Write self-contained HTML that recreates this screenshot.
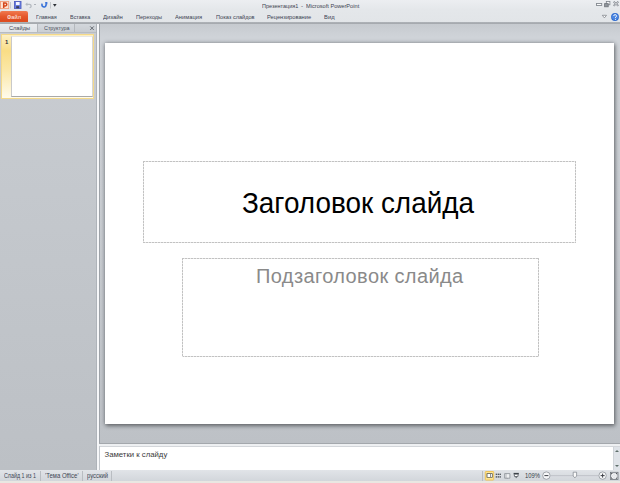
<!DOCTYPE html>
<html><head><meta charset="utf-8">
<style>
*{margin:0;padding:0;box-sizing:border-box}
html,body{width:620px;height:483px;overflow:hidden;background:#c0c4c9;font-family:"Liberation Sans",sans-serif}
.a{position:absolute}
.t{position:absolute;white-space:nowrap;transform-origin:0 0;line-height:1}
#top{left:0;top:0;width:620px;height:22px;background:linear-gradient(#eceef1,#e4e7ea 45%,#e2e5e8)}
#tline{left:0;top:22px;width:620px;height:2px;background:linear-gradient(#b0b4b9,#a3a7ac)}
.tab{top:14px;font-size:6.2px;color:#3c4452}
#file{left:0;top:11px;width:28px;height:12px;background:linear-gradient(#f07a50,#e5582c 45%,#dc4a20 85%,#e8652c);border-radius:2px 2px 0 0}
#left{left:0;top:24px;width:96px;height:446px;background:linear-gradient(#cacdd2,#c5c9ce 30%,#bcc0c5)}
#ltabs{left:0;top:24px;width:96px;height:9px;background:linear-gradient(#d3d7dc,#c7cbd0)}
#lt1{left:0;top:24px;width:37px;height:9px;background:linear-gradient(#e9ecef,#dfe2e6)}
#lt2{left:37px;top:24px;width:38px;height:9px;background:linear-gradient(#d6dadf,#c9cdd2);border-left:1px solid #b4b8bd;border-right:1px solid #b4b8bd}
#split{left:96px;top:24px;width:3px;height:446px;background:#f6f7f9;border-left:1px solid #aeb3b9}
#splitd{left:99px;top:24px;width:1px;height:420px;background:#9ea3a9}
#stage{left:100px;top:24px;width:520px;height:420px;background:linear-gradient(#c6cacf,#cfd3d8 3%,#c8ccd1 50%,#bdc1c6)}
#slide{left:105px;top:43px;width:509px;height:381px;background:#fff;box-shadow:0 0 4px rgba(50,55,65,.45),1px 2px 4px rgba(0,0,0,.38)}
#notesb{left:99px;top:444px;width:521px;height:2px;background:#eef0f2}
#notesl{left:99px;top:446px;width:521px;height:1px;background:#d3d6da}
#notes{left:99px;top:447px;width:521px;height:23px;background:#fff}
#vs{left:613px;top:447px;width:7px;height:23px;background:#dfe3e8;border-left:1px solid #d0d4d9}
#status{left:0;top:470px;width:620px;height:11px;background:linear-gradient(#e1e4e8,#d2d6db)}
#sbot{left:0;top:481px;width:620px;height:2px;background:#e9e7e2}
.hd{background-image:repeating-linear-gradient(90deg,#c2c2c2 0 2px,#e6e6e6 2px 3px)}
.vd{background-image:repeating-linear-gradient(180deg,#c2c2c2 0 2px,#e6e6e6 2px 3px)}
.sdiv{top:471px;width:1px;height:10px;background:#b9bdc2}
</style></head><body>
<div class="a" id="top"></div>
<!-- QAT -->
<svg class="a" style="left:0;top:0" width="60" height="11" viewBox="0 0 60 11">
  <rect x="0.5" y="1.4" width="8.2" height="7.2" fill="#fde4d6" stroke="#f09a76" stroke-width="0.9"/>
  <path d="M3.7 7.9V3.1h1.7a1.4 1.4 0 0 1 0 2.8H3.7" fill="none" stroke="#d4461a" stroke-width="1.5"/>
  <rect x="10.2" y="2" width="0.7" height="6.5" fill="#b4b8be"/>
  <rect x="14.5" y="1.5" width="6.5" height="7" fill="#6b7fe0" stroke="#4f5fc0" stroke-width="0.9"/>
  <rect x="16" y="2" width="3.6" height="3" fill="#f4f6ff"/>
  <rect x="16.2" y="6.2" width="3" height="2" fill="#3a3f55"/>
  <path d="M27 4.3H29.2A1.7 1.7 0 0 1 29.6 7.7" fill="none" stroke="#b5bac1" stroke-width="1.3"/><path d="M25.2 4.3l2.2-1.9v3.8z" fill="#b5bac1"/>
  <rect x="34" y="4.2" width="2" height="0.8" fill="#a0a6ad"/>
  <path d="M42.3 3.6A2.1 2.1 0 1 0 46.1 4.9V2.6" fill="none" stroke="#3a73d9" stroke-width="1.6"/><path d="M44.8 2.1h2.6v2.4z" fill="#3a73d9"/>
  <rect x="50.2" y="2" width="0.7" height="6.5" fill="#b4b8be"/>
  <path d="M53 4h3.6l-1.8 2.8z" fill="#2c3036"/>
</svg>
<div class="t" style="left:262px;top:3px;font-size:6.2px;color:#3d4350;transform:scaleX(.89)">Презентация1</div><div class="t" style="left:301px;top:3px;font-size:6.2px;color:#3d4350">-</div><div class="t" style="left:306.4px;top:3px;font-size:6.2px;color:#3d4350;transform:scaleX(.91)">Microsoft PowerPoint</div>
<!-- window controls -->
<svg class="a" style="left:594px;top:0" width="26" height="23" viewBox="0 0 26 23">
  <rect x="2.5" y="3.5" width="5.2" height="2" fill="#fafbfc" stroke="#858a91" stroke-width="0.9"/>
  <rect x="12.3" y="1.4" width="3.6" height="3.4" fill="#f4f5f7" stroke="#7d828a" stroke-width="0.8"/>
  <rect x="10.6" y="3.6" width="3.6" height="3.2" fill="#8e939a" stroke="#6f747b" stroke-width="0.8"/>
  <path d="M19.6 1.7l4.8 4.2M24.4 1.7l-4.8 4.2" stroke="#7d828a" stroke-width="1.7"/>
  <path d="M19.6 1.7l4.8 4.2M24.4 1.7l-4.8 4.2" stroke="#f4f5f7" stroke-width="0.6"/>
  <path d="M8.3 15.3h4.2l-2.1 2.6z" fill="#fff" stroke="#80858c" stroke-width="0.8"/>
  <circle cx="21" cy="17" r="3.9" fill="#2f6bcf"/>
  <circle cx="21" cy="16.8" r="3.1" fill="#4c86e0"/>
  <path d="M19.7 16a1.4 1.3 0 1 1 1.8 1.2v.8" fill="none" stroke="#fff" stroke-width="0.9"/>
  <rect x="21" y="18.9" width="0.9" height="0.9" fill="#fff"/>
</svg>
<!-- tabs -->
<div class="a" id="file"></div>
<div class="t" style="left:7px;top:14px;font-size:6.2px;color:#fff2ee;transform:scaleX(.92)">Файл</div>
<div class="t tab" style="left:35.6px;transform:scaleX(.88)">Главная</div>
<div class="t tab" style="left:69.7px;transform:scaleX(.88)">Вставка</div>
<div class="t tab" style="left:103px;transform:scaleX(.95)">Дизайн</div>
<div class="t tab" style="left:136px;transform:scaleX(.9)">Переходы</div>
<div class="t tab" style="left:175.3px;transform:scaleX(.93)">Анимация</div>
<div class="t tab" style="left:215.9px;transform:scaleX(.905)">Показ слайдов</div>
<div class="t tab" style="left:266.6px;transform:scaleX(.923)">Рецензирование</div>
<div class="t tab" style="left:324.3px;transform:scaleX(.94)">Вид</div>
<div class="a" id="tline"></div>
<!-- left pane -->
<div class="a" id="left"></div>
<div class="a" id="ltabs"></div>
<div class="a" id="lt1"></div>
<div class="a" id="lt2"></div>
<div class="a" style="left:0;top:32px;width:96px;height:1px;background:#b8bcc1"></div>
<div class="t" style="left:9px;top:25px;font-size:6px;color:#3c4452;transform:scaleX(.94)">Слайды</div>
<div class="t" style="left:43.7px;top:25px;font-size:6px;color:#4a505c;transform:scaleX(.9)">Структура</div>
<svg class="a" style="left:89px;top:25px" width="6" height="6" viewBox="0 0 6 6"><path d="M1.2 1.4l3.6 3.6M4.8 1.4l-3.6 3.6" stroke="#5f646b" stroke-width="0.95"/></svg>
<div class="a" style="left:1px;top:34px;width:93px;height:65px;border:1px solid #f4d98a;background:linear-gradient(#fdf0c4,#f9dd85 25%,#fbe7a6 55%,#fffbec)"></div>
<div class="a" style="left:11px;top:36px;width:82px;height:61px;background:#fff;border:1px solid #c9c9c9;border-top-color:#e6e6e6;border-right-color:#d6d6d6;border-bottom-color:#a9a9a9"></div>
<div class="t" style="left:5px;top:39px;font-size:6px;font-weight:bold;color:#30343a">1</div>
<div class="a" id="split"></div>
<div class="a" id="splitd"></div>
<div class="a" id="stage"></div>
<div class="a" id="slide"></div>
<div class="a hd" style="left:143px;top:161px;width:433px;height:1px"></div>
<div class="a hd" style="left:143px;top:242px;width:433px;height:1px"></div>
<div class="a vd" style="left:143px;top:161px;width:1px;height:82px"></div>
<div class="a vd" style="left:575px;top:161px;width:1px;height:82px"></div>
<div class="t" style="left:242px;top:189px;font-size:29px;color:#000;transform:scaleX(.962)">Заголовок слайда</div>
<div class="a hd" style="left:182px;top:258px;width:357px;height:1px"></div>
<div class="a hd" style="left:182px;top:356px;width:357px;height:1px"></div>
<div class="a vd" style="left:182px;top:258px;width:1px;height:99px"></div>
<div class="a vd" style="left:538px;top:258px;width:1px;height:99px"></div>
<div class="t" style="left:256px;top:266px;font-size:20px;letter-spacing:0.39px;color:#8a8a8a">Подзаголовок слайда</div>
<div class="a" id="notesb"></div><div class="a" style="left:99px;top:443px;width:521px;height:1px;background:#a3a7ac"></div>
<div class="a" id="notesl"></div>
<div class="a" id="notes"></div>
<div class="t" style="left:104.5px;top:450.5px;font-size:7.75px;color:#3a3a3a">Заметки к слайду</div>
<div class="a" style="left:99px;top:446px;width:1px;height:24px;background:#c3c7cc"></div>
<div class="a" id="vs"></div>
<svg class="a" style="left:614px;top:447px" width="6" height="23" viewBox="0 0 6 23"><path d="M1 5h4l-2-2z" fill="#5f6f6a"/><path d="M1 18h4l-2 2z" fill="#5f6f6a"/></svg>
<!-- status -->
<div class="a" id="status"></div>
<div class="a" id="sbot"></div>
<div class="t" style="left:4px;top:472.5px;font-size:6.3px;color:#3e4652;transform:scaleX(.85)">Слайд 1 из 1</div>
<div class="a sdiv" style="left:40px"></div>
<div class="t" style="left:45px;top:472.5px;font-size:6.3px;color:#3e4652;transform:scaleX(.95)">'Тема Office'</div>
<div class="a sdiv" style="left:82px"></div>
<div class="t" style="left:86.8px;top:472.5px;font-size:6.3px;color:#3e4652;transform:scaleX(.93)">русский</div>
<div class="a sdiv" style="left:111px"></div>
<div class="a sdiv" style="left:482px"></div>
<svg class="a" style="left:484px;top:470px" width="136" height="12" viewBox="0 0 136 12">
  <rect x="1.3" y="1.5" width="8.4" height="8.6" rx="0.6" fill="#fde594" stroke="#efc14f" stroke-width="0.9"/>
  <rect x="2.6" y="3.3" width="6" height="4.3" fill="#454a52"/>
  <rect x="3.4" y="4" width="2.6" height="3" fill="#fff"/>
  <rect x="6.6" y="4" width="1.3" height="3" fill="#fff"/>
  <g fill="#50555d"><rect x="11.7" y="3.6" width="1.3" height="1.4"/><rect x="13.6" y="3.6" width="1.4" height="1.4"/><rect x="15.5" y="3.6" width="1.4" height="1.4"/><rect x="11.7" y="6.2" width="1.3" height="1.4"/><rect x="13.6" y="6.2" width="1.4" height="1.4"/><rect x="15.5" y="6.2" width="1.4" height="1.4"/></g>
  <path d="M20.6 3.6h5.3v4.6h-5.3z" fill="#eef0f2" stroke="#8a8f96" stroke-width="0.8"/>
  <path d="M22 3.6v4.6M23.3 8.2v.8" stroke="#8a8f96" stroke-width="0.6"/>
  <path d="M29.6 3.5h5.2" stroke="#3a3f46" stroke-width="1.2"/>
  <path d="M30.1 4.2h4.2l-.5 2.4h-3.2z" fill="#fff" stroke="#4b5058" stroke-width="0.8"/>
  <path d="M32.2 6.6v1.5" stroke="#4b5058" stroke-width="0.9"/>
  <circle cx="62.4" cy="5.6" r="3.7" fill="#f7f8f9" stroke="#8f949b" stroke-width="0.8"/>
  <rect x="60.4" y="5.1" width="4" height="1" fill="#3c4047"/>
  <rect x="66.5" y="5.3" width="48" height="0.8" fill="#b9bdc3"/>
  <path d="M89.2 2.2h3.4v3.8l-1.7 1.9l-1.7-1.9z" fill="#fbfbfb" stroke="#7d828a" stroke-width="0.7"/>
  <circle cx="118.6" cy="5.6" r="3.7" fill="#f7f8f9" stroke="#8f949b" stroke-width="0.8"/>
  <rect x="116.6" y="5.1" width="4" height="1" fill="#3c4047"/>
  <rect x="118.1" y="3.6" width="1" height="4" fill="#3c4047"/>
  <rect x="126.4" y="2.3" width="7.6" height="7.2" fill="#e3e5e8" stroke="#6f747b" stroke-width="0.8"/>
  <path d="M127.4 3.3l2 2M133 3.3l-2 2M127.4 8.5l2-2M133 8.5l-2-2" stroke="#ffffff" stroke-width="0.9"/>
  <path d="M127.2 3.1h1.6l-1.6 1.6zM133.2 3.1h-1.6l1.6 1.6zM127.2 8.7h1.6l-1.6-1.6zM133.2 8.7h-1.6l1.6-1.6z" fill="#3c4047"/>
</svg>
<div class="t" style="left:525px;top:472.5px;font-size:6.3px;color:#363c46;transform:scaleX(.93)">109%</div>
</body></html>
